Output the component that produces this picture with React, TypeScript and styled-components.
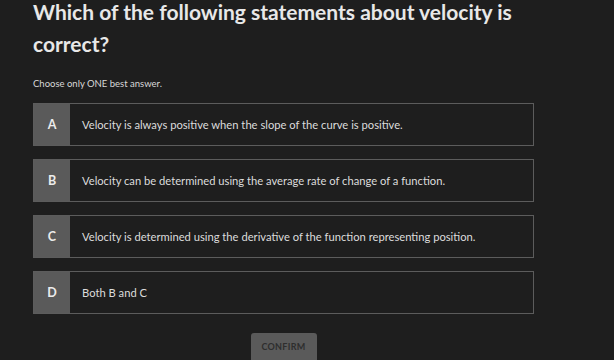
import React from 'react';
import styled, { createGlobalStyle } from 'styled-components';

const Global = createGlobalStyle`
  html, body {
    margin: 0;
    padding: 0;
    background: #1e1e1e;
    overflow: hidden;
  }
  body {
    font-family: Lato, "Noto Sans", sans-serif;
  }
`;

const Page = styled.div`
  width: 614px;
  height: 360px;
  padding: 0 33px;
  box-sizing: border-box;
  overflow: hidden;
`;

const Title = styled.h1`
  margin: -4px 0 0;
  width: 480px;
  font-size: 21px;
  line-height: 32px;
  font-weight: 700;
  color: #e8e8e8;
`;

const Hint = styled.p`
  margin: 17px 0 12px;
  font-size: 9.5px;
  line-height: 14px;
  color: #d8d8d8;
`;

const Options = styled.div`
  display: flex;
  flex-direction: column;
  gap: 13px;
  width: 501px;
`;

const Option = styled.div`
  display: flex;
  height: 43px;
  box-sizing: border-box;
  border: 1px solid #5c5c5c;
  cursor: pointer;
`;

const Letter = styled.div`
  width: 36px;
  flex: none;
  display: flex;
  align-items: center;
  justify-content: center;
  background: #5a5a5a;
  color: #ececec;
  font-size: 12.5px;
  font-weight: 700;
`;

const Text = styled.div`
  display: flex;
  align-items: center;
  padding-left: 12px;
  color: #dcdcdc;
  font-size: 11.2px;
`;

const Footer = styled.div`
  display: flex;
  justify-content: center;
  width: 501px;
  padding-top: 19px;
`;

const Confirm = styled.button`
  width: 66px;
  height: 30px;
  border: none;
  border-radius: 3px;
  background: #5a5a5a;
  color: #2e2e2e;
  font-family: inherit;
  font-size: 9px;
  font-weight: 700;
  letter-spacing: 0.3px;
  padding: 0 0 4px;
`;

const answers = [
  ['A', 'Velocity is always positive when the slope of the curve is positive.'],
  ['B', 'Velocity can be determined using the average rate of change of a function.'],
  ['C', 'Velocity is determined using the derivative of the function representing position.'],
  ['D', 'Both B and C'],
];

export default function App() {
  return (
    <Page>
      <Global />
      <Title>Which of the following statements about velocity is correct?</Title>
      <Hint>Choose only ONE best answer.</Hint>
      <Options>
        {answers.map(([letter, text]) => (
          <Option key={letter}>
            <Letter>{letter}</Letter>
            <Text>{text}</Text>
          </Option>
        ))}
      </Options>
      <Footer>
        <Confirm>CONFIRM</Confirm>
      </Footer>
    </Page>
  );
}
